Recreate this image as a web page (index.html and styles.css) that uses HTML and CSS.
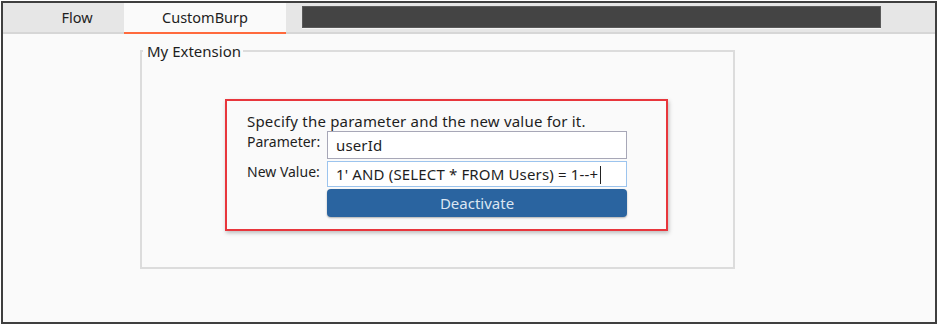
FILE: index.html
```html
<!DOCTYPE html>
<html lang="en">
<head>
    <meta charset="UTF-8">
    <title>CustomBurp</title>
    <link rel="stylesheet" href="styles.css">
</head>
<body>
    <div class="frame">
        <div class="tabbar">
            <div class="tab">Flow</div>
            <div class="tab active">CustomBurp</div>
            <div class="tab-filler"></div>
        </div>

        <div class="content">
            <fieldset class="extension">
                <legend>My Extension</legend>
                <div class="highlight">
                    <div class="intro">Specify the parameter and the new value for it.</div>
                    <div class="form">
                        <label for="param">Parameter:</label>
                        <div class="field">userId</div>
                        <label for="value">New Value:</label>
                        <div class="field focused">1' AND (SELECT * FROM Users) = 1--+<span class="caret"></span></div>
                        <div></div>
                        <button class="deactivate">Deactivate</button>
                    </div>
                </div>
            </fieldset>
        </div>
    </div>
</body>
</html>
```

FILE: styles.css
```css
body {
    margin: 0;
    padding: 0;
    background-color: #ffffff;
    font-family: "Noto Sans", "Open Sans", sans-serif;
    color: #1e1e1e;
}
.frame {
    margin: 1px 1px 0 1px;
    height: 319px;
    border: 2px solid #3f3f3f;
    background-color: #fafafa;
}
.tabbar {
    display: flex;
    align-items: stretch;
    height: 29px;
    background-color: #e6e6e6;
    border-bottom: 2px solid #d6d6d6;
}
.tab {
    font-size: 14.5px;
    line-height: 29px;
    text-align: center;
    box-sizing: border-box;
}
.tab:first-child {
    margin-left: 27px;
    width: 94px;
}
.tab.active {
    width: 162px;
    background-color: #fafafa;
    border-bottom: 2px solid #ff6a3d;
    margin-bottom: -2px;
}
.tab-filler {
    margin: 3px 0 4px 16px;
    width: 577px;
    background-color: #444444;
    border: 1px solid #5a5a5a;
    box-shadow: 0 1px 0 #f4f4f4;
}
.content {
    padding: 8px 0 0 137px;
}
.extension {
    margin: 0;
    width: 595px;
    height: 227px;
    box-sizing: border-box;
    border: 2px solid #dcdcdc;
    padding: 0;
}
.extension legend {
    font-size: 15px;
    padding: 0 2px 0 4px;
    margin-left: 1px;
    line-height: 18px;
}
.highlight {
    margin: 39px 0 0 83px;
    width: 443px;
    height: 132px;
    box-sizing: border-box;
    border: 2px solid #e8363c;
    box-shadow: 1px 2px 4px rgba(0, 0, 0, 0.25);
    padding: 10px 0 0 20px;
}
.intro {
    font-size: 15px;
    letter-spacing: 0.2px;
    line-height: 20px;
}
.form {
    display: grid;
    grid-template-columns: 80px 300px;
    row-gap: 2px;
}
.form label {
    font-size: 14px;
    line-height: 20px;
    margin-top: 1px;
}
.field {
    height: 28px;
    box-sizing: border-box;
    border: 1px solid #a7a7b7;
    background-color: #ffffff;
    font-size: 15px;
    letter-spacing: 0.15px;
    line-height: 26px;
    padding-left: 8px;
}
.field.focused {
    height: 26px;
    line-height: 24px;
    border-color: #9cc4ee;
}
.caret {
    display: inline-block;
    width: 1px;
    height: 18px;
    margin-left: 2px;
    vertical-align: -4px;
    background-color: #222;
}
.deactivate {
    height: 28px;
    border: none;
    border-radius: 4px;
    background-color: #2a64a0;
    color: #dbe6f2;
    font-family: "Noto Sans", "Open Sans", sans-serif;
    font-size: 15px;
    box-shadow: 0 1px 2px rgba(0, 0, 0, 0.3);
    padding: 0;
}
```
